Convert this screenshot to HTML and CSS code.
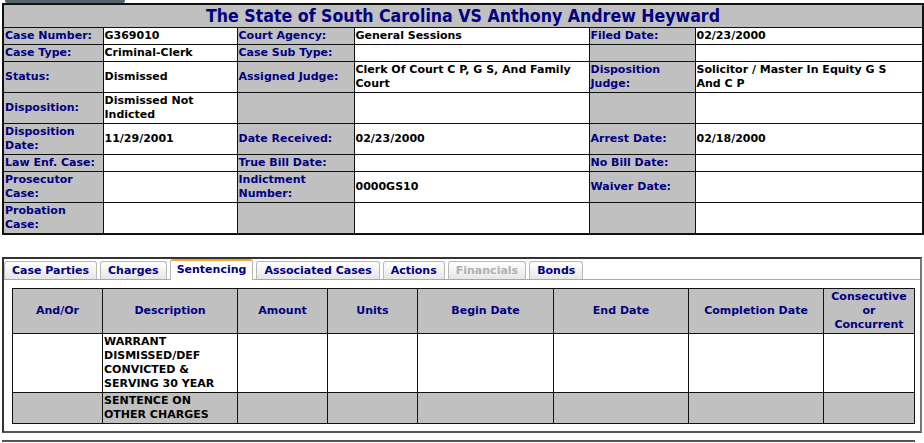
FILE: index.html
```html
<!DOCTYPE html>
<html lang="en">
<head>
    <meta charset="UTF-8">
    <title>Case Details - G369010</title>
    <link rel="stylesheet" href="styles.css">
</head>
<body>
    <div class="top-strip"></div>

    <table class="case-table">
        <colgroup>
            <col class="c1"><col class="c2"><col class="c3"><col class="c4"><col class="c5"><col class="c6">
        </colgroup>
        <tr>
            <td colspan="6" class="case-title">The State of South Carolina VS Anthony Andrew Heyward</td>
        </tr>
        <tr>
            <td class="lbl">Case Number:</td>
            <td class="val">G369010</td>
            <td class="lbl">Court Agency:</td>
            <td class="val">General Sessions</td>
            <td class="lbl">Filed Date:</td>
            <td class="val">02/23/2000</td>
        </tr>
        <tr>
            <td class="lbl">Case Type:</td>
            <td class="val">Criminal-Clerk</td>
            <td class="lbl">Case Sub Type:</td>
            <td class="val"></td>
            <td class="lbl"></td>
            <td class="val"></td>
        </tr>
        <tr>
            <td class="lbl">Status:</td>
            <td class="val">Dismissed</td>
            <td class="lbl">Assigned Judge:</td>
            <td class="val">Clerk Of Court C P, G S, And Family Court</td>
            <td class="lbl">Disposition Judge:</td>
            <td class="val">Solicitor / Master In Equity G S And C P</td>
        </tr>
        <tr class="tall">
            <td class="lbl">Disposition:</td>
            <td class="val">Dismissed Not Indicted</td>
            <td class="lbl"></td>
            <td class="val"></td>
            <td class="lbl"></td>
            <td class="val"></td>
        </tr>
        <tr class="tall">
            <td class="lbl">Disposition Date:</td>
            <td class="val">11/29/2001</td>
            <td class="lbl">Date Received:</td>
            <td class="val">02/23/2000</td>
            <td class="lbl">Arrest Date:</td>
            <td class="val">02/18/2000</td>
        </tr>
        <tr>
            <td class="lbl">Law Enf. Case:</td>
            <td class="val"></td>
            <td class="lbl">True Bill Date:</td>
            <td class="val"></td>
            <td class="lbl">No Bill Date:</td>
            <td class="val"></td>
        </tr>
        <tr class="tall">
            <td class="lbl">Prosecutor Case:</td>
            <td class="val"></td>
            <td class="lbl">Indictment Number:</td>
            <td class="val">0000GS10</td>
            <td class="lbl">Waiver Date:</td>
            <td class="val"></td>
        </tr>
        <tr class="tall">
            <td class="lbl">Probation Case:</td>
            <td class="val"></td>
            <td class="lbl"></td>
            <td class="val"></td>
            <td class="lbl"></td>
            <td class="val"></td>
        </tr>
    </table>

    <div class="tab-box">
        <ul class="tabs">
            <li class="tab">Case Parties</li>
            <li class="tab">Charges</li>
            <li class="tab active">Sentencing</li>
            <li class="tab">Associated Cases</li>
            <li class="tab">Actions</li>
            <li class="tab disabled">Financials</li>
            <li class="tab">Bonds</li>
        </ul>
        <div class="tab-panel">
            <table class="sentence-table">
                <colgroup>
                    <col class="s1"><col class="s2"><col class="s3"><col class="s4"><col class="s5"><col class="s6"><col class="s7"><col class="s8">
                </colgroup>
                <tr class="head">
                    <th>And/Or</th>
                    <th>Description</th>
                    <th>Amount</th>
                    <th>Units</th>
                    <th>Begin Date</th>
                    <th>End Date</th>
                    <th>Completion Date</th>
                    <th>Consecutive or Concurrent</th>
                </tr>
                <tr>
                    <td></td>
                    <td class="desc">WARRANT DISMISSED/DEF CONVICTED &amp; SERVING 30 YEAR</td>
                    <td></td><td></td><td></td><td></td><td></td><td></td>
                </tr>
                <tr class="alt">
                    <td></td>
                    <td class="desc">SENTENCE ON OTHER CHARGES</td>
                    <td></td><td></td><td></td><td></td><td></td><td></td>
                </tr>
            </table>
        </div>
    </div>

    <div class="next-section"></div>
</body>
</html>
```

FILE: styles.css
```css
body {
    margin: 0;
    padding: 0 2px;
    background-color: #fff;
    font-family: 'DejaVu Sans', 'Liberation Sans', sans-serif;
    font-size: 11px;
    line-height: 14px;
    font-weight: bold;
    color: #000;
}

.top-strip {
    width: 120px;
    height: 3px;
    margin-left: 3px;
    background-color: #55646a;
    border-radius: 0 0 2px 2px;
}

/* case header table */
.case-table {
    width: 920px;
    table-layout: fixed;
    border-collapse: collapse;
    border: 2px solid #111;
}

.case-table .c1 { width: 100px; }
.case-table .c2 { width: 134px; }
.case-table .c3 { width: 117px; }
.case-table .c4 { width: 235px; }
.case-table .c5 { width: 106px; }
.case-table .c6 { width: 228px; }

.case-table td {
    border: 1px solid #111;
    padding: 1px;
    vertical-align: middle;
    height: 14px;
}

.case-table tr.tall td {
    height: 28px;
}

.case-title {
    background-color: #c0c0c0;
    color: #000080;
    font-family: 'DejaVu Sans Condensed', 'DejaVu Sans', sans-serif;
    font-size: 17.6px;
    line-height: 22px;
    text-align: center;
}

.case-table td.case-title {
    height: 22px;
    padding: 0;
}

.lbl {
    background-color: #c0c0c0;
    color: #000080;
}

.case-table td.val {
    background-color: #fff;
    color: #000;
    padding-right: 12px;
}

/* tabs */
.tab-box {
    width: 916px;
    margin-top: 22px;
    border: 2px solid #333;
    border-right-color: #777;
    border-bottom-color: #555;
    padding-top: 1px;
}

.tabs {
    list-style: none;
    margin: 0;
    padding: 0;
    display: flex;
    gap: 3px;
    border-bottom: 1px solid #aaa;
    height: 19px;
    align-items: flex-end;
}

.tab {
    height: 17px;
    padding: 0 7px;
    line-height: 17px;
    color: #000080;
    border: 1px solid #b8b8b8;
    border-bottom: none;
    border-radius: 3px 3px 0 0;
    background: linear-gradient(#ffffff, #e6e6e6);
}

.tab.active {
    height: 18px;
    padding: 0 6px 1px;
    background: #fff;
    border-top: 2px solid #f0a838;
    margin-bottom: -1px;
}

.tab.disabled {
    color: #b0b0b0;
}

.tab-panel {
    padding: 8px 6px 7px 8px;
}

/* sentencing grid */
.sentence-table {
    width: 902px;
    table-layout: fixed;
    border-collapse: collapse;
    border: 1px solid #111;
}

.sentence-table .s1 { width: 90px; }
.sentence-table .s2 { width: 135px; }
.sentence-table .s3 { width: 90px; }
.sentence-table .s4 { width: 90px; }
.sentence-table .s5 { width: 136px; }
.sentence-table .s6 { width: 135px; }
.sentence-table .s7 { width: 135px; }
.sentence-table .s8 { width: 91px; }

.sentence-table th,
.sentence-table td {
    border: 1px solid #111;
    padding: 1px;
}

.sentence-table th {
    background-color: #c0c0c0;
    color: #000080;
    text-align: center;
    vertical-align: middle;
    padding: 1px 4px;
}

.sentence-table tr.alt td {
    background-color: #c0c0c0;
}

.sentence-table td.desc {
    text-align: left;
    vertical-align: top;
}

.next-section {
    width: 913px;
    margin-top: 7px;
    border-top: 2px solid #555;
}
```
